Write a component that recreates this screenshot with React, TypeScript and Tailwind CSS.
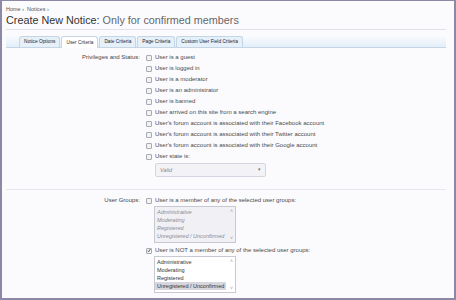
import React from "react";

const font = { fontFamily: '"Liberation Sans", Arial, sans-serif' };

function Box({ checked = false }: { checked?: boolean }) {
    return (
        <span className="w-[6px] h-[6px] border border-[#a9a9b4] bg-[#f2f2f5] rounded-[1px] flex items-center justify-center shrink-0">
            {checked && (
                <svg width="5" height="5" viewBox="0 0 10 10">
                    <path d="M1.5 5.5 L4 8 L8.5 1.5" stroke="#333" strokeWidth="2" fill="none" />
                </svg>
            )}
        </span>
    );
}

function Option({ text, checked = false }: { text: string; checked?: boolean }) {
    return (
        <div className="h-[11px] flex items-center gap-[3px] text-[6px] text-[#4a4a4a]">
            <Box checked={checked} />
            <span>{text}</span>
        </div>
    );
}

const groups = ["Administrative", "Moderating", "Registered", "Unregistered / Unconfirmed"];

function ListBox({ disabled }: { disabled: boolean }) {
    return (
        <div
            className={`relative w-[82px] h-[37px] border border-[#c8c8d2] ml-[8px] py-[1px] ${
                disabled ? "bg-[#f1f1f5] text-[#8a8a96] italic" : "bg-white text-[#333]"
            }`}
        >
            {groups.map((g, i) => (
                <div
                    key={g}
                    className={`h-[8px] leading-[8px] pl-[2px] w-[71px] text-[5.5px] ${
                        !disabled && i === 3 ? "bg-[#d6d6de]" : ""
                    }`}
                >
                    {g}
                </div>
            ))}
            <span className="absolute right-[2px] top-[1px] text-[5px] text-[#999]">˄</span>
            <span className="absolute right-[2px] bottom-[0px] text-[5px] text-[#999]">˅</span>
        </div>
    );
}

const tabs = ["Notice Options", "User Criteria", "Date Criteria", "Page Criteria", "Custom User Field Criteria"];

export default function App() {
    return (
        <div
            style={font}
            className="w-[456px] h-[300px] overflow-hidden bg-[#fbfbfe] border-l-2 border-t border-r-2 border-b-2 border-[#8c88a6] px-[4px]"
        >
            <div className="text-[5.5px] text-[#555] pt-[4px] h-[12px]">Home › &nbsp;Notices ›</div>
            <div className="h-[17px] border-b border-[#e2e2ec] text-[10.8px] leading-[14px] mr-[4px]">
                <span className="text-[#333]">Create New Notice:</span>{" "}
                <span className="text-[#666]">Only for confirmed members</span>
            </div>
            <div className="mt-[6px] h-[12px] flex items-end pl-[13px] gap-[1px] border-b border-[#c4d6e6] bg-gradient-to-t from-[#e3eef8] to-[#f9fbfe] mr-[4px]">
                {tabs.map((t, i) => (
                    <div
                        key={t}
                        className={`h-[11px] px-[4px] flex items-center text-[4.8px] rounded-t-[3px] border border-b-0 border-[#c4d6e6] ${
                            i === 1 ? "bg-white text-[#333] h-[12px] -mb-[1px]" : "bg-[#e6f0f9] text-[#223]"
                        }`}
                    >
                        {t}
                    </div>
                ))}
            </div>

            <div className="flex pt-[4px]">
                <div className="w-[134px] text-right text-[6px] text-[#444] h-[11px] leading-[11px]">Privileges and Status:</div>
                <div className="pl-[6px] flex flex-col">
                    <Option text="User is a guest" />
                    <Option text="User is logged in" />
                    <Option text="User is a moderator" />
                    <Option text="User is an administrator" />
                    <Option text="User is banned" />
                    <Option text="User arrived on this site from a search engine" />
                    <Option text="User's forum account is associated with their Facebook account" />
                    <Option text="User's forum account is associated with their Twitter account" />
                    <Option text="User's forum account is associated with their Google account" />
                    <Option text="User state is:" />
                    <div className="ml-[9px] mt-[1px] w-[111px] h-[14px] border border-[#d6d6e0] rounded-[2px] bg-[#f3f3f7] flex items-center justify-between px-[4px] text-[5.5px]">
                        <span className="italic text-[#888]">Valid</span>
                        <span className="text-[#777] text-[5px]">▾</span>
                    </div>
                </div>
            </div>

            <div className="mt-[12px] border-b border-[#e6e6ee] mr-[4px]" />

            <div className="flex pt-[5px]">
                <div className="w-[134px] text-right text-[6px] text-[#444] h-[11px] leading-[11px]">User Groups:</div>
                <div className="pl-[6px] flex flex-col">
                    <Option text="User is a member of any of the selected user groups:" />
                    <ListBox disabled />
                    <div className="mt-[2px]">
                        <Option text="User is NOT a member of any of the selected user groups:" checked />
                    </div>
                    <ListBox disabled={false} />
                </div>
            </div>
        </div>
    );
}
